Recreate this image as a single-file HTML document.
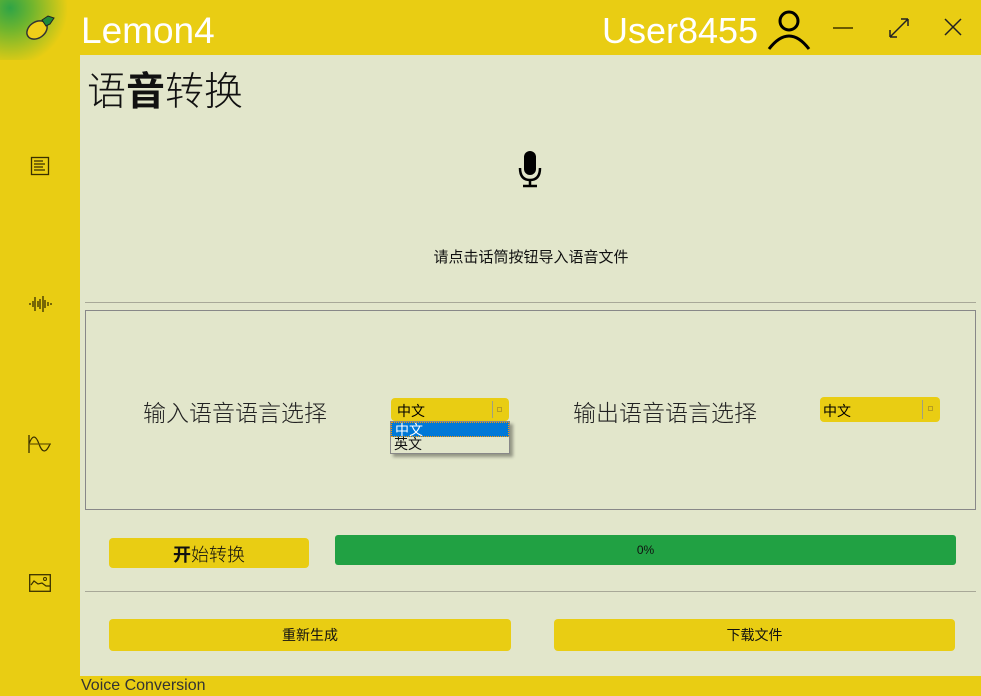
<!DOCTYPE html>
<html><head><meta charset="utf-8"><style>
*{margin:0;padding:0;box-sizing:border-box}
body{width:981px;height:696px;background:#e9cd13;position:relative;overflow:hidden;font-family:"Liberation Sans","Noto Sans CJK SC",sans-serif}
.abs{position:absolute}
#content{left:80px;top:55px;width:901px;height:621px;background:#e2e6cb}
.btn{background:#e9cd13;border-radius:4px;text-align:center;font-size:14px;color:#111}
.sel{background:#e9cd13;border-radius:4px;font-size:14px;color:#000}
.sel .sep{position:absolute;top:3px;bottom:3px;width:1px;background:#a0a080}
.sel .ar{position:absolute;width:5px;height:5px;border:1px solid #b89e20;top:9px}
</style></head><body>
<div class="abs" style="left:0;top:0;width:80px;height:60px;background:radial-gradient(circle at 10px 8px,#2fa446 0,#6fb52e 22px,#e9cd13 58px)"></div>
<svg class="abs" style="left:24px;top:14px" width="32" height="28" viewBox="0 0 32 28">
<ellipse cx="13" cy="16" rx="11" ry="8" transform="rotate(-35 13 16)" fill="#f0cf1a" stroke="#333" stroke-width="1.5"/>
<path d="M18 6 L24 2 L30 4 L26 10 L22 12Z" fill="#1f8a3a" stroke="#222" stroke-width="1"/>
</svg>
<div class="abs" style="left:81px;top:8px;font-size:37px;color:#fff;line-height:46px">Lemon4</div>
<div class="abs" style="left:602px;top:8px;font-size:36px;color:#fff;line-height:46px">User8455</div>
<svg class="abs" style="left:766px;top:8px" width="46" height="42" viewBox="0 0 46 42">
<circle cx="23" cy="13" r="9" fill="none" stroke="#000" stroke-width="3"/>
<path d="M3 41 Q23 15 43 41" fill="none" stroke="#000" stroke-width="3"/>
</svg>
<div class="abs" style="left:833px;top:27px;width:20px;height:2px;background:#6b5a00"></div>
<svg class="abs" style="left:887px;top:16px" width="24" height="24" viewBox="0 0 24 24"><path d="M3 21 L21 3 M3 21 v-7 M3 21 h7 M21 3 h-7 M21 3 v7" stroke="#222" stroke-width="1.5" fill="none"/></svg>
<svg class="abs" style="left:943px;top:17px" width="20" height="20" viewBox="0 0 20 20"><path d="M2 2 L18 18 M18 2 L2 18" stroke="#222" stroke-width="1.5"/></svg>

<svg class="abs" style="left:30px;top:156px" width="20" height="20" viewBox="0 0 20 20"><rect x="1.5" y="1.5" width="17" height="17" fill="none" stroke="#3a3000" stroke-width="1.3"/><path d="M4 5h9M4 8h11M4 11h9M4 14h11" stroke="#3a3000" stroke-width="1.2"/></svg>
<svg class="abs" style="left:29px;top:294px" width="23" height="20" viewBox="0 0 23 20"><path d="M1 9v2M4 7v6M6 3v14M9 7v6M11 5v10M14 2v16M16 6v8M19 8v4M22 9v2" stroke="#3a3000" stroke-width="1.3"/></svg>
<svg class="abs" style="left:28px;top:434px" width="24" height="20" viewBox="0 0 24 20"><path d="M1 1v18M1 10 Q6 -4 11 10 T22 10" fill="none" stroke="#3a3000" stroke-width="1.3"/><path d="M1 10h22" stroke="#6b5a00" stroke-width="1.3"/></svg>
<svg class="abs" style="left:29px;top:574px" width="22" height="18" viewBox="0 0 22 18"><rect x="0.7" y="0.7" width="20.6" height="16.6" fill="none" stroke="#3a3000" stroke-width="1.3"/><path d="M2 11 L5 7 L9 10 L13 9 L17 12 L21 12" fill="none" stroke="#3a3000" stroke-width="1.2"/><circle cx="16" cy="5" r="1.5" fill="none" stroke="#3a3000"/></svg>

<div id="content" class="abs"></div>
<div class="abs" style="left:87px;top:64px;font-size:39px;color:#111;line-height:50px;font-family:'Noto Sans CJK SC',sans-serif;font-weight:300">语<b style="font-weight:700">音</b>转换</div>
<svg class="abs" style="left:517px;top:150px" width="26" height="38" viewBox="0 0 26 38"><rect x="7" y="1" width="12" height="24" rx="6" fill="#000"/><path d="M3 18 Q3 30 13 30 Q23 30 23 18" fill="none" stroke="#000" stroke-width="2.5"/><path d="M13 30v6M6 36h14" stroke="#000" stroke-width="2.5"/></svg>
<div class="abs" style="left:381px;top:246px;width:300px;text-align:center;font-size:15px;color:#111">请点击话筒按钮导入语音文件</div>
<div class="abs" style="left:85px;top:302px;width:891px;height:1px;background:#a8a898"></div>
<div class="abs" style="left:85px;top:310px;width:891px;height:200px;border:1px solid #888"></div>
<div class="abs" style="left:143px;top:394px;font-size:23px;color:#222;font-family:'Noto Sans CJK SC',sans-serif;font-weight:300">输入语音语言选择</div>
<div class="abs" style="left:573px;top:394px;font-size:23px;color:#222;font-family:'Noto Sans CJK SC',sans-serif;font-weight:300">输出语音语言选择</div>
<div class="abs sel" style="left:391px;top:398px;width:118px;height:23px;padding:3px 6px"><span>中文</span><div class="sep" style="left:101px"></div><div class="ar" style="left:106px"></div></div>
<div class="abs" style="left:390px;top:421px;width:120px;height:33px;background:#e2e6cb;border:1px solid #888;box-shadow:3px 3px 3px rgba(0,0,0,.35);font-size:14px;line-height:15px">
<div style="background:#0078d7;color:#fff;border:1px dotted #f90;padding-left:3px;height:15px">中文</div>
<div style="padding-left:3px;color:#111">英文</div></div>
<div class="abs sel" style="left:820px;top:397px;width:120px;height:25px;padding:4px 3px"><span>中文</span><div class="sep" style="left:102px"></div><div class="ar" style="left:108px"></div></div>

<div class="abs btn" style="left:109px;top:538px;width:200px;height:30px;line-height:32px;font-size:18px;font-family:'Noto Sans CJK SC',sans-serif;font-weight:300"><b style="font-weight:700">开</b>始转换</div>
<div class="abs" style="left:335px;top:535px;width:621px;height:30px;background:#21a143;border-radius:3px;text-align:center;line-height:30px;font-size:12px;color:#111">0%</div>
<div class="abs" style="left:85px;top:591px;width:891px;height:1px;background:#a8a898"></div>
<div class="abs btn" style="left:109px;top:619px;width:402px;height:32px;line-height:32px">重新生成</div>
<div class="abs btn" style="left:554px;top:619px;width:401px;height:32px;line-height:32px">下载文件</div>
<div class="abs" style="left:81px;top:677px;font-size:16px;color:#333;line-height:18px">Voice Conversion</div>
</body></html>
